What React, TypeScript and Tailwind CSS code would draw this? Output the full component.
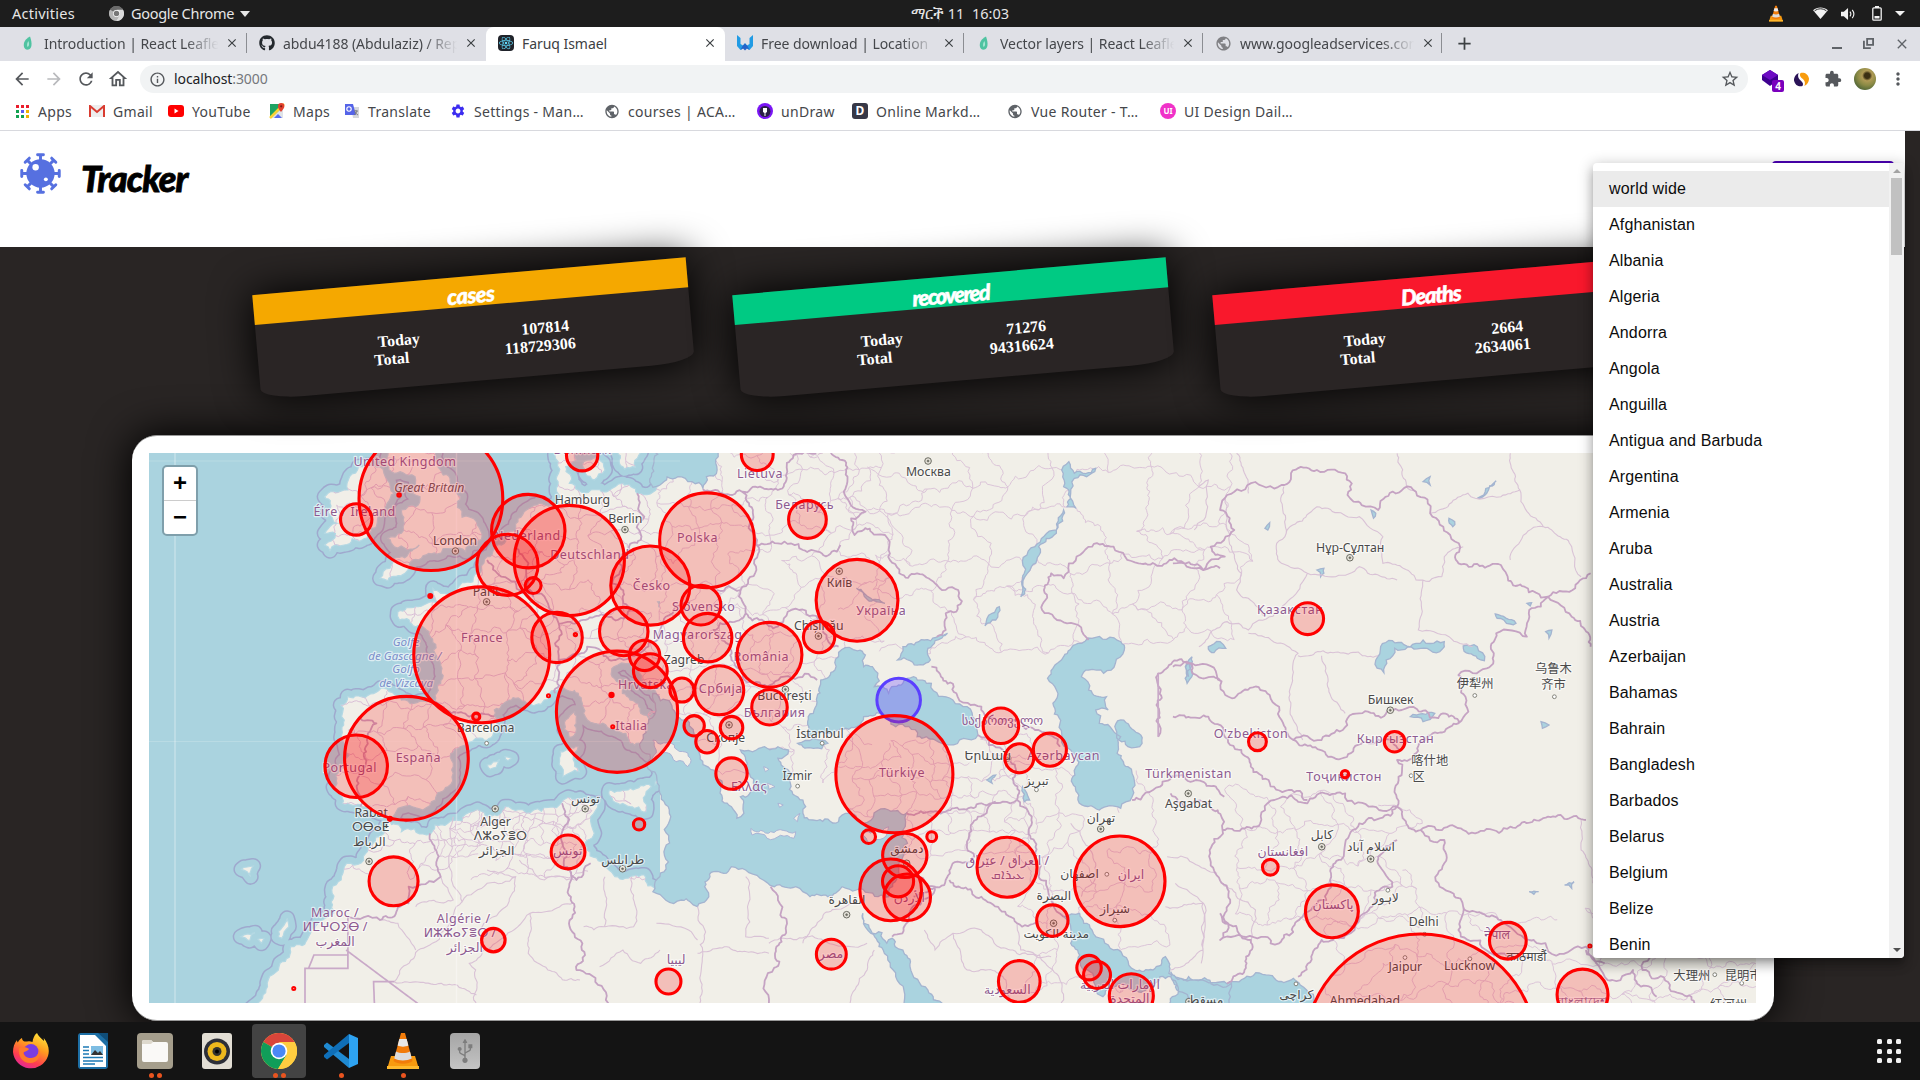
import React from "react";
import { FaGithub, FaReact, FaUsb } from "react-icons/fa";
import {
  MdArrowBack,
  MdArrowForward,
  MdRefresh,
  MdOutlineHome,
  MdInfoOutline,
  MdStarBorder,
  MdExtension,
  MdMoreVert,
  MdPublic,
  MdSettings,
  MdClose,
  MdAdd,
} from "react-icons/md";

/* ---------- map geometry ---------- */

type Pt = [number, number];
type Zone = "W" | "C" | "E";

const ZONES: Record<Zone, { x: number; sx: number }> = {
  W: { x: 130, sx: 2.8 },
  C: { x: 660, sx: 2.8 },
  E: { x: 1180, sx: 2.119 },
};

const parse = (zone: Zone, s: string): Pt[] =>
  s
    .trim()
    .split(/\s+/)
    .map((p) => {
      const [x, y] = p.split(",").map(Number);
      return [ZONES[zone].x + x / ZONES[zone].sx, 430 + y / 3] as Pt;
    });

function makeRandom(seed: number) {
  let s = seed;
  return () => {
    s = (s * 1664525 + 1013904223) % 4294967296;
    return s / 4294967296 - 0.5;
  };
}

/* Midpoint displacement gives coasts and borders a natural wobble. */
function roughen(points: Pt[], closed: boolean, amount: number, seed = 7): string {
  const rnd = makeRandom(seed + points.length * 131);
  const src = closed ? [...points, points[0]] : points;
  const out: Pt[] = [src[0]];
  const split = (a: Pt, b: Pt) => {
    const dx = b[0] - a[0];
    const dy = b[1] - a[1];
    const len = Math.hypot(dx, dy);
    if (len < 4.5) {
      out.push(b);
      return;
    }
    const k = rnd() * amount;
    const m: Pt = [(a[0] + b[0]) / 2 - dy * k, (a[1] + b[1]) / 2 + dx * k];
    split(a, m);
    split(m, b);
  };
  for (let i = 1; i < src.length; i++) split(src[i - 1], src[i]);
  return "M" + out.map((p) => p[0].toFixed(1) + "," + p[1].toFixed(1)).join("L") + (closed ? "Z" : "");
}

/* Province boundaries: an irregular mesh over a rectangle. */
function mesh(x0: number, y0: number, x1: number, y1: number, cell: number, seed: number): string {
  const rnd = makeRandom(seed);
  const cols = Math.ceil((x1 - x0) / cell);
  const rows = Math.ceil((y1 - y0) / cell);
  const g: Pt[][] = [];
  for (let r = 0; r <= rows; r++) {
    g.push([]);
    for (let c = 0; c <= cols; c++) {
      g[r].push([
        x0 + c * cell + (r % 2 ? cell / 2 : 0) + rnd() * cell * 0.7,
        y0 + r * cell + rnd() * cell * 0.7,
      ]);
    }
  }
  let d = "";
  for (let r = 0; r <= rows; r++)
    for (let c = 0; c <= cols; c++) {
      if (c < cols && rnd() > -0.36) d += roughen([g[r][c], g[r][c + 1]], false, 0.55, r * 31 + c);
      if (r < rows && rnd() > -0.3) d += roughen([g[r][c], g[r + 1][c]], false, 0.55, r * 17 + c + 5);
    }
  return d;
}

const WEST_LAND = [
  "740,40 720,100 740,130 800,150 790,190 812,200 800,230 760,240 765,270 760,310 722,325 740,350 810,345 790,362 740,385 728,415 700,445 722,452 770,430 800,388 860,372 940,365 970,340 985,310 970,275 930,262 925,200 895,170 870,120 862,40",
  "610,180 615,140 640,110 700,110 720,150 740,190 720,220 700,240 690,290 650,330 600,345 560,362 545,345 575,310 545,310 580,280 555,250 560,220 545,200 570,185",
  "1195,40 1200,130 1205,200 1190,235 1140,225 1110,240 1080,300 1040,345 1000,380 985,420 960,455 910,480 870,490 848,475 850,500 860,520 800,530 750,545 755,570 800,590 830,600 850,660 870,700 870,760 855,820 830,815 760,810 640,798 590,825 600,870 595,930 590,1020 595,1120 650,1130 690,1145 725,1168 745,1145 820,1140 855,1110 890,1070 905,1030 900,990 940,945 1020,905 1030,870 1020,840 1060,810 1110,820 1160,810 1210,770 1255,790 1270,850 1300,880 1360,900 1400,940 1440,960 1480,990 1485,1030 1470,1065 1500,1060 1525,1010 1515,970 1568,985 1600,960 1480,900 1430,850 1400,810 1380,760 1350,740 1355,710 1400,700 1420,720 1440,760 1490,800 1568,860 1620,880 1620,150 1530,150 1484,165 1420,190 1380,160 1340,182 1290,180 1230,160 1220,110 1250,90 1250,40",
  "1365,40 1370,90 1385,118 1415,112 1425,75 1430,40",
  "1270,95 1310,85 1330,120 1300,150 1275,130",
  "345,1730 385,1670 420,1600 500,1520 570,1450 565,1380 600,1310 660,1270 690,1220 722,1175 760,1205 830,1215 890,1180 960,1145 1050,1130 1130,1140 1210,1115 1260,1105 1310,1120 1290,1160 1300,1210 1280,1260 1330,1310 1440,1335 1480,1380 1568,1410 1620,1430 1620,2600 345,2600",
  "1205,965 1255,950 1258,1025 1212,1040",
  "1220,870 1245,845 1250,900 1230,922",
  "1342,1080 1460,1070 1445,1145 1400,1130 1350,1105",
  "1000,1005 1035,988 1025,1012 1008,1018",
  "1050,980 1068,985 1058,992",
  "312,1318 345,1308 338,1340",
  "415,1520 440,1465 445,1490 425,1525",
  "310,1520 350,1508 335,1532",
  "358,1528 375,1525 368,1540",
];

const CENTRE_WATER = [
  "-20,40 165,40 160,120 130,140 120,175 90,155 50,140 0,165 -20,172",
  "412,920 415,860 440,800 450,750 490,720 500,680 530,652 575,675 570,710 610,730 600,770 640,790 680,760 710,740 760,760 820,810 860,830 885,870 890,915 850,925 770,930 720,920 660,890 620,850 570,860 520,895 470,910",
  "665,690 680,650 740,630 805,610 770,632 750,655 757,690 700,692",
  "1085,745 1100,715 1130,680 1170,640 1210,625 1290,635 1300,660 1275,700 1200,720 1180,740 1200,780 1250,800 1255,840 1220,840 1230,880 1260,890 1290,920 1280,970 1310,1010 1322,1100 1290,1135 1230,1140 1170,1110 1155,1060 1165,1010 1150,960 1120,880 1100,820 1110,780",
  "1290,870 1340,910 1350,940 1310,950 1285,930",
  "-20,790 30,820 70,870 100,920 110,970 150,1020 170,1080 200,1130 215,1165 235,1150 225,1100 265,1070 250,1030 240,990 225,960 270,960 330,950 360,960 330,985 345,1010 370,1030 365,1060 400,1110 400,1150 440,1172 500,1175 530,1150 570,1180 640,1140 690,1150 680,1200 680,1280 665,1340 640,1400 620,1395 550,1380 510,1370 470,1400 420,1400 380,1370 320,1370 280,1345 240,1320 200,1310 150,1325 125,1370 130,1410 105,1430 60,1410 -20,1385",
  "385,940 430,925 470,940 430,955",
  "568,1450 590,1500 635,1540 650,1525 680,1560 700,1610 750,1680 790,1730 685,1730 660,1640 625,1560 590,1510 570,1470",
  "1130,1460 1175,1450 1210,1500 1270,1560 1330,1620 1380,1620 1415,1580 1425,1630 1480,1640 1600,1660 1600,1740 1500,1740 1470,1690 1430,1640 1400,1640 1370,1670 1320,1680 1260,1670 1240,1700 1215,1640 1170,1590 1150,1540",
  "1145,95 1160,130 1220,115 1160,145 1150,190 1165,235 1140,230 1145,180 1130,170",
  "1130,240 1110,310 1060,350 1040,410 1010,500 1020,430 1050,350 1110,300",
  "950,530 940,570 910,588 930,550",
  "550,475 590,505 630,520 580,508",
  "1490,680 1480,740 1475,700",
  "1015,1070 1035,1110 1020,1115",
  "915,1050 940,1035 930,1060",
];

const CENTRE_LAND = [
  "-20,930 40,945 85,985 78,1010 20,968 -20,990",
  "255,1195 310,1205 380,1205 375,1225 300,1225 258,1215",
  "560,1215 620,1205 640,1190 625,1225 590,1240",
  "290,1010 305,1018 295,1025",
  "300,1060 322,1070 305,1078",
  "375,1165 392,1150 385,1175",
  "330,1120 345,1125 335,1132",
];

const EAST_WATER = [
  "-20,1625 100,1662 200,1645 240,1645 255,1665 290,1740 -20,1740",
  "415,690 425,650 450,632 500,640 560,635 560,650 510,655 455,655 437,690 432,728",
  "600,648 630,650 645,692 630,685",
  "488,860 540,850 515,875",
  "668,552 712,580 700,582 672,565",
  "60,650 85,635 97,655 72,668",
  "20,700 25,740 15,760",
  "515,155 530,140 530,165",
  "630,205 670,152 650,190",
  "570,265 582,275 578,290",
  "290,420 305,415 298,440",
  "405,240 415,250 410,265",
  "180,295 190,278 186,300",
  "775,605 788,600 782,625",
  "765,875 782,885 768,895",
  "735,520 745,518 742,528",
  "815,1365 835,1355 830,1375",
  "740,1385 760,1385 750,1393",
];

const BORDERS: [Zone, string][] = [
  ["C", "365,90 420,70 510,90 525,140 520,200 575,245 535,265 545,315 630,315 640,360 670,430 720,430 770,460 835,480 830,545 800,550 800,600 775,620"],
  ["C", "120,178 230,185 260,240 270,345 330,340 400,360 495,365 505,345"],
  ["C", "230,185 280,170 330,180 365,90"],
  ["C", "270,345 270,420 225,480 160,480"],
  ["C", "225,480 240,550 330,590 390,540 450,570 500,650"],
  ["C", "240,550 150,600 200,690 300,770 440,750"],
  ["C", "1200,630 1140,580 1070,540 1075,480 1095,430 1130,445 1145,400 1210,350 1270,350 1340,400 1440,385 1475,410 1568,415"],
  ["C", "1395,920 1395,730 1485,700 1568,750"],
  ["C", "760,710 830,790 900,830 1000,870 1060,900 1120,950"],
  ["C", "890,915 960,960 990,1060 1000,1110 1040,1170 1050,1280 1060,1340 1100,1420 1130,1460"],
  ["C", "690,1150 800,1145 900,1120 960,1115 1000,1110"],
  ["C", "710,1400 800,1350 880,1280 890,1160 940,1115"],
  ["C", "810,1350 900,1400 1000,1480 1060,1480"],
  ["C", "1322,1110 1400,1070 1500,1050 1580,1100"],
  ["C", "310,1370 305,1720"],
  ["C", "710,1340 770,1370 690,1480 650,1520"],
  ["E", "-15,400 50,420 95,380 65,350 115,300 85,240 95,205 215,165 290,120 350,130 355,195 420,240 500,185 530,250 590,400 680,405 730,470 780,500 870,430"],
  ["E", "780,500 740,540 735,620 670,610 650,715 590,735 605,800 590,880 470,840 380,850 300,930 240,930 215,870 210,830 190,795 110,805 25,700 -15,710"],
  ["E", "780,500 830,560 870,650"],
  ["E", "-15,860 60,860 130,960 150,1010 230,1080 270,1110"],
  ["E", "590,880 520,930 460,990 460,1130"],
  ["E", "240,930 320,980 400,940 470,960"],
  ["E", "90,1200 170,1180 200,1110 270,1120 350,1090 400,1130 460,1130"],
  ["E", "-20,1090 60,1120 90,1200 75,1330 95,1450 85,1530 210,1540 260,1460 310,1410 320,1330 350,1240 380,1180 460,1130"],
  ["E", "85,1450 150,1530 140,1580 100,1660"],
  ["E", "250,1640 300,1530 370,1500 400,1440 450,1370 420,1280 460,1230"],
  ["E", "460,1130 510,1200 560,1230 560,1300 550,1370 600,1430 680,1470 740,1530 860,1550 900,1600"],
  ["E", "510,1200 600,1200 700,1190 780,1160 860,1170"],
  ["E", "600,1430 590,1500 680,1570 740,1580"],
  ["E", "860,1560 900,1640 960,1620 1010,1700"],
  ["E", "1010,1540 980,1620 1060,1690 1090,1720"],
  ["W", "855,815 900,850 950,860 1020,860"],
  ["W", "1000,390 1040,440 1100,490 1170,520 1200,580 1190,640 1200,690 1190,790"],
  ["W", "1080,300 1090,370 1110,440 1130,500"],
  ["W", "1420,190 1440,260 1430,330 1370,400 1350,460 1400,540 1300,560 1200,580"],
  ["W", "1200,690 1280,650 1360,690 1440,660 1500,560 1568,520"],
  ["W", "640,860 690,880 660,950 640,1060 645,1130"],
  ["W", "840,1210 860,1270 870,1340 780,1370 780,1420 700,1470 610,1460"],
  ["W", "1210,1120 1215,1310 1245,1430 1265,1560 1250,1620 1330,1740"],
  ["W", "1215,1310 1250,1350 1290,1300"],
];

const STRAIGHT: [Zone, string][] = [
  ["W", "610,1460 610,1615 490,1615 490,1740"],
  ["W", "605,1560 830,1740"],
  ["W", "685,1740 682,1655 740,1655"],
  ["W", "500,1615 515,1575 610,1575"],
  ["C", "1395,920 1395,730"],
];

const THIN: [Zone, string][] = [
  ["W", "870,1340 905,1410 800,1430"],
  ["W", "905,1160 900,1350 930,1415 1000,1360 1080,1340"],
  ["W", "740,1655 830,1550 930,1415"],
  ["W", "700,1470 750,1480 800,1560"],
  ["W", "740,1655 970,1695"],
  ["W", "970,1740 968,1620 950,1600 990,1560 1120,1450 1240,1420"],
  ["W", "1120,1450 1115,1570 1170,1620 1260,1650"],
  ["W", "1000,1320 1080,1340 1040,1440 980,1500"],
  ["W", "1090,1290 1160,1350 1245,1350"],
  ["W", "1330,1340 1328,1490 1270,1490"],
  ["W", "1405,1340 1410,1490 1330,1490"],
  ["W", "1315,1610 1380,1560 1430,1600 1484,1560"],
  ["C", "105,1430 105,1740"],
  ["C", "105,1570 305,1570"],
  ["C", "240,1340 240,1520 305,1525"],
  ["C", "305,1540 580,1540"],
  ["C", "-10,1480 80,1500 105,1530"],
  ["C", "400,1540 460,1450 550,1410"],
  ["C", "520,1740 580,1620 600,1560"],
  ["C", "740,1500 770,1560 820,1510 900,1500 980,1560 1095,1580"],
  ["C", "820,1510 860,1620 960,1640 980,1740"],
  ["C", "1000,1480 1010,1560 1100,1620 1120,1740"],
  ["C", "1420,1280 1560,1330"],
  ["C", "1415,1430 1520,1420 1520,1560 1430,1620"],
  ["C", "1150,1180 1220,1300 1180,1400"],
  ["E", "250,677 420,677"],
  ["E", "145,610 250,670 260,930"],
  ["E", "300,677 320,800 350,850"],
  ["E", "220,170 225,310 205,340 215,400 270,430 330,440 380,410 460,450"],
  ["E", "225,310 290,230 380,260 430,320 430,400 500,450 555,440"],
  ["E", "270,430 240,500 145,600 100,575 40,650"],
  ["E", "515,450 505,600 570,620 620,650"],
  ["E", "555,440 560,380 600,350"],
  ["E", "460,70 480,170 500,185"],
  ["E", "530,250 610,190 680,200 720,180 770,290 700,390"],
  ["E", "720,180 700,70"],
  ["E", "770,290 830,350 850,440"],
  ["E", "120,70 145,190"],
  ["E", "95,205 100,300 130,430 120,480 180,560"],
  ["E", "40,170 60,150 30,300"],
  ["E", "-10,1360 50,1420 45,1600"],
  ["E", "150,1540 160,1440 90,1360"],
  ["E", "850,1170 850,1260 875,1360"],
];

const CIRCLES: [number, number, number][] = [
  [351.5, 407, 58.7], [290.5, 424, 12.8], [325.5, 404, 1], [475, 371.5, 12.8], [431, 433.5, 30],
  [414, 461, 25], [464.5, 457.5, 45], [435, 478, 6.5], [577, 441, 38.7], [530.7, 478, 32.3],
  [618, 371, 13], [659, 424, 15.4], [699.5, 490, 33.4], [572, 494, 16.2], [577.5, 520.5, 19.8],
  [509, 515.5, 19.8], [526, 535, 12.4], [530.7, 547.5, 13.8], [454.5, 520.3, 20.6], [469.5, 518, 0.9],
  [393, 534.5, 55.5], [351, 486.5, 1.2], [388.5, 585, 2.9], [447.5, 568, 0.8], [503.5, 581, 49.5],
  [499, 567.3, 1.3], [500, 593.3, 0.8], [331.5, 619, 50.5], [290.5, 625.5, 25.5], [318, 668.5, 1.2],
  [628, 534.5, 26.5], [668.5, 520, 12.8], [587, 563.5, 20], [628, 577.3, 14.5], [556.5, 563.3, 9.8],
  [566.5, 592.5, 8.3], [597, 594, 9.2], [577, 605.5, 9.2], [597, 631.5, 12.8],
  [730, 632, 47.8], [817, 592.5, 14.5], [832, 619, 11.8], [857, 612, 13.5], [1067.5, 505, 13],
  [1026.5, 605.5, 7.3], [1138.5, 605.5, 8.4], [1098, 632, 3], [1037, 708, 6.4], [1087.3, 744, 21.6],
  [1231, 768, 15], [1292, 812, 20.8], [1298, 772.3, 0.8], [914, 719.5, 37], [822, 708, 24.5],
  [859, 751.5, 12.8], [895.5, 796, 11], [889, 790, 10], [923.5, 813, 18], [832, 801.3, 17],
  [709, 683, 5.6], [760.5, 683, 4], [738.5, 698.3, 18.1], [727, 726.5, 25.2], [733, 719.5, 12.7],
  [740.5, 732.5, 19], [678.5, 779, 12.2], [545.5, 801.3, 10.2], [521.5, 673, 4.6], [463.5, 695.5, 13.8],
  [321, 719.5, 20], [402.5, 767.5, 9.6], [239.5, 807, 0.8],
];

/* kind: p = country, c = city, b = bay, g = island */
const LABELS: [string, number, number, string][] = [
  ["United Kingdom", 330, 380.5, "p"], ["Great Britain", 350, 402, "g"], ["Éire / Ireland", 289, 421.5, "p"],
  ["London", 371, 445, "c"], ["Danmark", 475, 371, "p"], ["Hamburg", 475, 412, "c"], ["Berlin", 510, 427.5, "c"],
  ["Nederland", 430, 441, "p"], ["Deutschland", 481, 456.5, "p"], ["Česko", 531.5, 482, "p"], ["Polska", 569, 443, "p"],
  ["Paris", 397, 487, "c"], ["France", 393, 524, "p"], ["Golfe", 331, 527.5, "b"],
  ["de Gascogne /", 330, 538.7, "b"], ["Golfo", 331, 549.9, "b"], ["de Vizcaya", 331, 561, "b"],
  ["Barcelona", 396, 597.5, "c"], ["España", 341, 622.5, "p"], ["Portugal", 285, 630.5, "p"],
  ["Italia", 515, 596, "p"], ["Hrvatska", 527, 562.5, "p"], ["Zagreb", 558, 542, "c"], ["Magyarország", 569, 522, "p"],
  ["Slovensko", 574, 499, "p"], ["România", 621, 539.5, "p"], ["Србија", 588, 566, "p"], ["България", 632, 585.5, "p"],
  ["București", 640, 571.5, "c"], ["Скопје", 592, 606, "c"], ["İstanbul", 669, 602.5, "c"], ["İzmir", 650.5, 637, "c"],
  ["Ελλάς", 611, 646, "p"], ["Türkiye", 736, 634.5, "p"], ["Lietuva", 620, 390.5, "p"], ["Беларусь", 656.5, 416, "p"],
  ["Москва", 757.5, 389, "c"], ["Київ", 685, 479.5, "c"], ["Україна", 719, 502.5, "p"], ["Chișinău", 668, 514.5, "c"],
  ["საქართველო", 818, 592, "p"], ["Երևան", 806, 621, "c"], ["Azərbaycan", 868, 621, "p"], ["تبریز", 846, 641, "c"],
  ["Türkmenistan", 970, 635.5, "p"], ["Aşgabat", 970, 659.5, "c"], ["تهران", 898.5, 671, "c"], ["اصفهان", 881, 717, "c"],
  ["ایران", 923, 717.5, "p"], ["شیراز", 910, 745.5, "c"], ["العراق / عێراق /", 822, 706.5, "p"], ["ܥܝܪܐܩ", 822, 718, "p"],
  ["دمشق", 740, 697, "c"], ["الأردن", 742, 737, "p"], ["القاهرة", 691, 738.5, "c"], ["البصرة", 860, 735, "c"],
  ["مدينة الكويت", 862, 766, "c"], ["السعودية", 822, 812, "p"], ["الإمارات العربية", 914, 808, "p"],
  ["المتحدة", 922, 819, "p"], ["مسقط", 984, 820, "c"], ["مصر", 678, 782.5, "p"], ["ليبيا", 551.5, 787.5, "p"],
  ["تونس", 477.5, 656, "c"], ["تونس", 463, 698.5, "p"], ["طرابلس", 508, 705.5, "c"], ["Alger", 404, 674.5, "c"],
  ["ⴷⵣⴰⵢⴻⵔ", 408, 686, "c"], ["الجزائر", 405, 698, "c"], ["Rabat", 302.5, 667.5, "c"], ["ⵔⴱⴰⵟ", 302, 679, "c"],
  ["الرباط", 301, 691, "c"], ["Maroc /", 273, 748.5, "p"], ["ⵍⵎⵖⵔⵉⴱ /", 273, 760.5, "p"], ["المغرب", 273, 772.5, "p"],
  ["Algérie /", 378, 753.5, "p"], ["ⵍⵣⵣⴰⵢⴻⵔ /", 375, 765.5, "p"], ["الجزائر", 379, 777.5, "p"],
  ["Нұр-Сұлтан", 1102, 451, "c"], ["Қазақстан", 1053, 501.5, "p"], ["乌鲁木", 1268, 550, "c"], ["齐市", 1268, 563, "c"],
  ["伊犁州", 1204, 562, "c"], ["Бишкек", 1135, 575, "c"], ["O'zbekiston", 1021, 603, "p"], ["Кыргызстан", 1139, 606.5, "p"],
  ["喀什地", 1167, 624.5, "c"], ["区", 1158, 638, "c"], ["Тоҷикистон", 1097, 637.5, "p"], ["کابل", 1079, 685, "c"],
  ["اسلام آباد", 1119, 695, "c"], ["افغانستان", 1047, 699, "p"], ["پاکستان", 1088, 742, "p"], ["لاہور", 1131, 737, "c"],
  ["Delhi", 1162, 756.5, "c"], ["नेपाल", 1222, 766.5, "p"], ["काठमाडौं", 1246, 785, "c"], ["Jaipur", 1147, 793, "c"],
  ["Lucknow", 1199.5, 792, "c"], ["Ahmedabad", 1114, 820.5, "c"], ["کراچی", 1058, 816, "c"], ["বাংলাদেশ", 1292, 821.5, "p"],
  ["大理州", 1381, 800, "c"], ["昆明市", 1423, 800, "c"], ["红河州", 1411, 824, "c"],
];

const CAPITALS: Pt[] = [
  [371.5, 450], [510, 432.5], [397, 491.5], [757.5, 376.5], [685, 466.5], [668, 519.5], [404, 660.5],
  [477.5, 660.5], [508, 709.5], [301, 703.5], [1102, 455.5], [1135, 580], [970, 648], [898.5, 677], [1079, 691.5],
  [1119, 701.5], [691, 747], [740, 705], [860, 754], [822.5, 619], [595, 592], [641, 563], [970.5, 818],
];

const TOWNS: Pt[] = [
  [397, 607], [671, 607], [651, 642], [846, 645], [903.5, 714], [910, 751.5], [1204, 568], [1269, 569],
  [1152, 633.5], [1133, 727], [1163, 763], [1147, 782], [1200, 783], [1400, 796], [1422, 803], [1058, 803.5],
];

const K = 1920 / 1568;
const paths = (zone: Zone, list: string[], amt = 0.5) => list.map((s, i) => roughen(parse(zone, s), true, amt, i + 3)).join("");
const linePath = (list: [Zone, string][], amt: number) =>
  list.map(([z, s], i) => roughen(parse(z, s), false, amt, i + 11)).join("");

const WEST = paths("W", WEST_LAND);
const CWATER = paths("C", CENTRE_WATER);
const CLAND = paths("C", CENTRE_LAND);
const EWATER = paths("E", EAST_WATER);

const LABEL_FILL: Record<string, string> = { p: "#8d5b91", c: "#4a4a4a", b: "#7b8fca", g: "#6b5a60" };

function WorldMap() {
  const font = '"Noto Sans", "DejaVu Sans", "Noto Sans CJK SC", sans-serif';
  return (
    <svg viewBox="149 453 1607 550" className="block h-[550px] w-[1607px]">
      <defs>
        <clipPath id="west-land">
          <path d={WEST} />
        </clipPath>
        <clipPath id="west-zone">
          <rect x="149" y="453" width="512" height="550" />
        </clipPath>
      </defs>
      <rect x="149" y="453" width="1607" height="550" fill="#aad3df" />
      <g clipPath="url(#west-zone)">
        <path d={WEST} fill="none" stroke="#9fa9ce" strokeWidth="16" strokeLinejoin="round" />
        <path d={WEST} fill="none" stroke="#aad3df" strokeWidth="13" strokeLinejoin="round" />
        <path d={WEST} fill="#f1efe8" stroke="#b4d8e3" strokeWidth="1.2" />
        <g clipPath="url(#west-land)" fill="none" stroke="#d9bfd6">
          <path d={mesh(330, 440, 680, 850, 24, 5)} strokeWidth="1" />
          <path d={mesh(440, 800, 580, 850, 14, 15)} strokeWidth="0.9" />
        </g>
      </g>
      <rect x="660" y="453" width="1096" height="550" fill="#f1efe8" />
      <g fill="none" stroke="#dcc5d9" strokeWidth="1">
        <path d={mesh(655, 450, 860, 760, 27, 21)} />
        <path d={mesh(860, 440, 1195, 640, 40, 8)} />
        <path d={mesh(850, 740, 1010, 850, 19, 32)} />
        <path d={mesh(1010, 780, 1130, 960, 34, 9)} />
        <path d={mesh(1230, 800, 1390, 920, 30, 19)} />
        <path d={mesh(1330, 920, 1756, 1003, 36, 29)} />
      </g>
      <path d={CWATER + EWATER} fill="#aad3df" stroke="#a4b4d0" strokeWidth="1.3" />
      <path d={CLAND} fill="#f1efe8" stroke="#a9b4d6" strokeWidth="1" />
      <path d={linePath(THIN, 0.3)} fill="none" stroke="#d9c2d6" strokeWidth="1.1" />
      <path d={linePath(BORDERS, 0.5)} fill="none" stroke="#c5a3c3" strokeWidth="1.8" strokeLinejoin="round" />
      <path d={linePath(STRAIGHT, 0)} fill="none" stroke="#c9a9c8" strokeWidth="1.7" />
      <path d="M175 453V1003M456.5 453V1003" stroke="#ffffff" strokeOpacity=".35" strokeWidth="1.400" />
      <path d="M149 461H680M149 741.5H680" stroke="#ffffff" strokeOpacity=".18" strokeWidth="1.200" />
      {CAPITALS.map(([x, y], i) => (
        <g key={i} fill="#e6e3da" stroke="#6b6b62">
          <circle cx={x * K + 0.5} cy={y * K} r="3.3" strokeWidth="1" />
          <circle cx={x * K + 0.5} cy={y * K} r="1" fill="#6b6b62" strokeWidth=".6" />
        </g>
      ))}
      {TOWNS.map(([x, y], i) => (
        <circle key={i} cx={x * K + 0.5} cy={y * K} r="1.9" fill="#fff" stroke="#77776e" strokeWidth=".9" />
      ))}
      {LABELS.map(([t, x, y, k], i) => (
        <text
          key={i}
          x={x * K + 0.8}
          y={y * K}
          textAnchor="middle"
          fontFamily={font}
          fontSize={k === "b" ? 11.6 : k === "p" ? 12.5 : 12.3}
          fontStyle={k === "b" || k === "g" ? "italic" : "normal"}
          letterSpacing={k === "p" && t.charCodeAt(0) < 1400 ? 0.5 : 0}
          fill={LABEL_FILL[k]}
          stroke="#ffffff"
          strokeOpacity=".6"
          strokeWidth="2.4"
          strokeLinejoin="round"
          paintOrder="stroke"
        >
          {t}
        </text>
      ))}
      <circle cx={733.5 * K + 0.5} cy={571.5 * K + 0.3} r={17.8 * K} fill="#6f50ff" fillOpacity=".33" stroke="#5b3fff" strokeWidth="3" />
      <g fill="#ff0000" fillOpacity=".2" stroke="#ff0000" strokeWidth="3.1">
        {CIRCLES.map(([x, y, r], i) => (
          <circle key={i} cx={x * K + 0.5} cy={y * K + 0.3} r={r * K} />
        ))}
        <circle cx="1420.5" cy="1050" r="116" />
      </g>
    </svg>
  );
}

/* ---------- small drawings ---------- */

const Leaf = () => (
  <svg viewBox="0 0 16 16" className="size-4">
    <path d="M10 1.500C5 4 3 8 4 12c.6 2 2.500 3 4.500 2.500C12 13.500 12.500 8 10 1.500z" fill="#4fc3a1" />
    <path d="M8.500 6c-1.500 2-2 4-1 6 1.500-.5 2.200-3 1-6z" fill="#a6e6d2" />
  </svg>
);

const Cone = ({ className }: { className: string }) => (
  <svg viewBox="0 0 32 36" className={className}>
    <path d="M4 23h24l4 13H0z" fill="#f89a0f" />
    <path d="M0 33h32v3H0z" fill="#ffb92e" />
    <path d="M14 0h4l7.500 28c-4 3.500-15 3.500-19 0z" fill="#f27c0a" />
    <path d="M12.300 6h7.400l1.700 6.500c-3 1.500-8 1.500-10.800 0z" fill="#e8e8e8" />
    <path d="M9 18.500c4 2 10 2 14 0l1.800 7c-5 2.500-13 2.500-17.600 0z" fill="#dcdcdc" />
  </svg>
);

const Virus = () => (
  <svg viewBox="0 0 42 42" className="size-[41px]">
    <g stroke="#5670e0" strokeWidth="3" strokeLinecap="round" fill="none">
      {[0, 45, 90, 135, 180, 225, 270, 315].map((a) => (
        <path key={a} d="M21 8V2M18 1.800h6" transform={`rotate(${a} 21 21)`} />
      ))}
    </g>
    <circle cx="21" cy="21" r="14.500" fill="#5670e0" />
    <circle cx="16" cy="14.500" r="3.300" fill="#fff" />
    <circle cx="26.500" cy="27" r="2" fill="#fff" />
  </svg>
);

const ChromeLogo = ({ className, gray = false }: { className: string; gray?: boolean }) => (
  <svg viewBox="0 0 36 36" className={className}>
    <circle cx="18" cy="18" r="18" fill={gray ? "#8a8a8a" : "#ffcd40"} />
    <path d="M18 18L2.400 9A18 18 0 0 1 33.600 9z" fill={gray ? "#6b6b6b" : "#d9453a"} />
    <path d="M2.400 9A18 18 0 0 0 17 36l8.500-14L18 18z" fill={gray ? "#b5b5b5" : "#109d59"} />
    <path d="M18 9h15.600A18 18 0 0 1 17 36l8.500-14z" fill={gray ? "#dadada" : "#ffcd40"} />
    <circle cx="18" cy="18" r="8.300" fill="#fff" />
    <circle cx="18" cy="18" r="6.600" fill={gray ? "#777" : "#4a88f5"} />
  </svg>
);

/* ---------- desktop chrome ---------- */

function TopBar() {
  return (
    <div className="relative flex h-[27px] flex-none items-center bg-[#1d1d1d] text-[14.500px] text-[#e6e6e6]">
      <span className="ml-3 w-[97px] tracking-[0.25px]">Activities</span>
      <ChromeLogo gray className="size-[15px]" />
      <span className="ml-[7px] tracking-[-0.3px]">Google Chrome</span>
      <span className="ml-[6px] size-0 border-x-[5px] border-t-[6px] border-x-transparent border-t-[#e6e6e6]" />
      <div className="absolute inset-0 flex items-center justify-center whitespace-pre">ማርች 11  16:03</div>
      <div className="ml-auto flex h-full items-center">
        <Cone className="mr-[30px] h-[17px] w-[14px]" />
        <svg viewBox="0 0 16 14" className="mr-[13px] h-[13px] w-[15px]">
          <path d="M0 3.500C4.500-.5 11.500-.5 16 3.500L8 13z" fill="#f2f2f2" />
          <path d="M1.600 4.200C5.500 1.200 10.500 1.200 14.400 4.200" stroke="#1d1d1d" strokeWidth="1" fill="none" />
        </svg>
        <svg viewBox="0 0 16 14" className="mr-4 h-[14px] w-[15px]" fill="#f2f2f2">
          <path d="M0 4.500h3L7.500.5v13L3 9.500H0z" />
          <path d="M9.500 4.500q2 2.500 0 5M12 2.500q3.500 4.500 0 9" stroke="#f2f2f2" strokeWidth="1.200" fill="none" />
        </svg>
        <svg viewBox="0 0 10 15" className="mr-[13px] h-[15px] w-[10px]">
          <rect x=".8" y="1.800" width="8.400" height="12.400" rx="1" fill="none" stroke="#f2f2f2" strokeWidth="1.300" />
          <path d="M3 0h4v2H3zM2.500 10h5v2.500h-5z" fill="#f2f2f2" />
        </svg>
        <span className="mr-[15px] size-0 border-x-[5px] border-t-[5px] border-x-transparent border-t-[#f2f2f2]" />
      </div>
    </div>
  );
}

const BlueW = () => (
  <svg viewBox="0 0 16 16" className="size-4">
    <path d="M0 0l3.500 3v6L6 10.500 8 8l2 2.500L12.500 9V3L16 0v11l-3.500 4L8 12l-4.500 3L0 11z" fill="#219be4" />
    <path d="M3.500 15L5.500 11 8 8.500 10.500 11l2 4-2.500-1.500-2 2-2-2z" fill="#2463c9" />
  </svg>
);

const TABS = [
  { title: "Introduction | React Leaflet", icon: <Leaf /> },
  { title: "abdu4188 (Abdulaziz) / Repos", icon: <FaGithub className="size-4 text-[#24292e]" /> },
  {
    title: "Faruq Ismael",
    active: true,
    icon: (
      <span className="flex size-4 items-center justify-center rounded-sm bg-[#20232a]">
        <FaReact className="size-[14px] text-[#61dafb]" />
      </span>
    ),
  },
  { title: "Free download | Location", icon: <BlueW /> },
  { title: "Vector layers | React Leaflet", icon: <Leaf /> },
  { title: "www.googleadservices.com", icon: <MdPublic className="size-[17px] text-[#808084]" /> },
];

function TabStrip() {
  return (
    <div className="flex h-[34px] flex-none items-center bg-[#dfe0e6] pl-2 text-[14px] text-[#45474b]">
      {TABS.map((t, i) => (
        <div
          key={i}
          className={
            "relative flex h-full w-[239px] flex-none items-center pb-[2px] pl-3 " +
            (t.active ? "rounded-t-lg bg-white text-[#3c4043]" : "")
          }
        >
          {t.icon}
          <span
            className={
              "ml-2 w-[176px] overflow-hidden whitespace-nowrap tracking-[-0.05px] " +
              (t.active ? "" : "[mask-image:linear-gradient(to_right,black_80%,transparent_99%)]")
            }
          >
            {t.title}
          </span>
          <MdClose className="ml-[5px] size-[14px] flex-none text-[#3c4043]" />
          {i !== 1 && !t.active && <span className="absolute right-0 h-5 w-px bg-[#8b8d92]" />}
        </div>
      ))}
      <MdAdd className="mb-[2px] ml-3 size-[21px] text-[#3c4043]" />
      <div className="ml-auto flex items-center pb-[1px] text-[#5f6368]">
        <span className="mt-2 h-[2px] w-[10px] bg-[#5f6368]" />
        <svg viewBox="0 0 12 12" className="ml-[21px] size-[11px]" fill="none" stroke="#5f6368" strokeWidth="2">
          <path d="M4.500 1H11v6.500H4.500zM1 3v8h7.500" />
        </svg>
        <MdClose className="ml-5 mr-[10px] size-4" />
      </div>
    </div>
  );
}

function Toolbar() {
  return (
    <div className="flex h-9 flex-none items-center bg-white pl-3 text-[#55585c]">
      <MdArrowBack className="size-5" />
      <MdArrowForward className="ml-3 size-5 text-[#b9babd]" />
      <MdRefresh className="ml-3 size-5" />
      <MdOutlineHome className="ml-[11px] size-[22px]" />
      <div className="ml-[11px] flex h-7 w-[1608px] items-center rounded-full bg-[#f1f3f4] pl-[9px] pr-2">
        <MdInfoOutline className="size-[17px]" />
        <span className="ml-2 pb-px text-[14px] tracking-[-0.1px] text-[#75787c]">
          <span className="text-[#202124]">localhost</span>:3000
        </span>
        <MdStarBorder className="ml-auto size-5" />
      </div>
      <div className="relative ml-[14px] size-[22px]">
        <svg viewBox="0 0 22 22" className="size-[22px]">
          <path d="M8 2l8 5v5l-8 6-8-6V7z" fill="#3f0090" />
          <path d="M8 2l8 5-8 5-8-5z" fill="#6d0cc4" />
        </svg>
        <span className="absolute -bottom-[2px] left-[10px] flex h-[12px] w-[12px] items-center justify-center rounded-[2px] bg-[#7a00bd] text-[10px] font-bold text-white">
          4
        </span>
      </div>
      <svg viewBox="0 0 16 16" className="ml-[10px] size-[15px]">
        <path d="M5 1C1 3 0 6 0 9c1 5 5 7 9 6 2-3-1-5-3-7S4 3 5 1z" fill="#2b1458" />
        <path d="M11 15c4-2 5-5 5-8-1-5-5-7-9-6-2 3 1 5 3 7s2 5 1 7z" fill="#f89c0e" />
      </svg>
      <MdExtension className="ml-[15px] size-[18px]" />
      <span className="ml-3 size-[22px] rounded-full bg-[radial-gradient(circle_at_60%_35%,#3b2f12_0_14%,#b09a55_26%,#8a8a45_50%,#4a6236_80%)]" />
      <MdMoreVert className="ml-3 size-5" />
    </div>
  );
}

const AppsGrid = () => (
  <span className="grid grid-cols-3 gap-[2px]">
    {["#ea1d2c", "#ea1d2c", "#ea1d2c", "#12a150", "#5c5cf0", "#f0b000", "#12a150", "#12a150", "#f0b000"].map((c, i) => (
      <span key={i} className="size-[3px]" style={{ background: c }} />
    ))}
  </span>
);

const BOOKMARKS: { w: string; label: string; icon: React.ReactNode }[] = [
  { w: "w-[75px]", label: "Apps", icon: <AppsGrid /> },
  {
    w: "w-[79px]",
    label: "Gmail",
    icon: (
      <svg viewBox="0 0 16 12" className="h-3 w-4">
        <path d="M0 0h16v12H0z" fill="#eee" />
        <path d="M1 12V1l7 6 7-6v11" fill="none" stroke="#d93b30" strokeWidth="2" />
      </svg>
    ),
  },
  {
    w: "w-[101px]",
    label: "YouTube",
    icon: (
      <svg viewBox="0 0 16 12" className="h-3 w-4">
        <rect width="16" height="12" rx="3" fill="#f00" />
        <path d="M6.500 3.500v5l4-2.500z" fill="#fff" />
      </svg>
    ),
  },
  {
    w: "w-[75px]",
    label: "Maps",
    icon: (
      <svg viewBox="0 0 16 16" className="size-4">
        <path d="M1 1h13v14H1z" fill="#1fa463" />
        <path d="M2 15L14 4v11z" fill="#dfe3e8" />
        <path d="M1 15L15 1" stroke="#f9d335" strokeWidth="2.500" />
        <path d="M5 15l4-4 4 4z" fill="#5b6cf0" />
        <path d="M12 9C9.500 6 9 4.500 9 3.200a3.200 3.200 0 0 1 6.400 0C15.400 4.500 14.500 6 12 9z" fill="#e2402f" />
        <circle cx="12.200" cy="3.300" r="1.100" fill="#7c1b12" />
      </svg>
    ),
  },
  {
    w: "w-[106px]",
    label: "Translate",
    icon: (
      <svg viewBox="0 0 16 16" className="size-4">
        <path d="M7 4h8v11H9z" fill="#d5d7dc" />
        <path d="M1 1h8l3 11H1z" fill="#5564e8" />
        <circle cx="5" cy="6" r="2.200" fill="none" stroke="#fff" strokeWidth="1.100" />
        <path d="M10 8h4M12 7v1M13 8q-1 3-3 4M11 9q1 2 3 3" stroke="#777" fill="none" strokeWidth=".9" />
      </svg>
    ),
  },
  { w: "w-[154px]", label: "Settings - Man…", icon: <MdSettings className="-ml-px size-4 text-[#3c2cf0]" /> },
  { w: "w-[153px]", label: "courses | ACA…", icon: <MdPublic className="size-[17px] text-[#5f6368]" /> },
  {
    w: "w-[95px]",
    label: "unDraw",
    icon: (
      <svg viewBox="0 0 16 16" className="size-4">
        <circle cx="8" cy="8" r="8" fill="#7a15f5" />
        <circle cx="8" cy="8.500" r="5.500" fill="#2b2045" />
        <path d="M6 5h4v4L8.500 10v3h-1v-3L6 9z" fill="#fff" />
      </svg>
    ),
  },
  {
    w: "w-[155px]",
    label: "Online Markd…",
    icon: (
      <span className="flex size-4 items-center justify-center rounded-[3px] bg-[#373847] text-[12px] font-bold text-white">D</span>
    ),
  },
  { w: "w-[153px]", label: "Vue Router - T…", icon: <MdPublic className="size-[17px] text-[#5f6368]" /> },
  {
    w: "w-[150px]",
    label: "UI Design Dail…",
    icon: (
      <span className="flex size-4 items-center justify-center rounded-full bg-[#f032c8] text-[8px] font-bold text-white">UI</span>
    ),
  },
];

function BookmarkBar() {
  return (
    <div className="flex h-[34px] flex-none items-center border-b border-[#d8d9de] bg-white pb-[5px] pl-[14px] text-[14px] tracking-[0.3px] text-[#45474b]">
      {BOOKMARKS.map((b) => (
        <div key={b.label} className={"flex flex-none items-center whitespace-nowrap " + b.w}>
          <span className="flex w-4 flex-none justify-center tracking-normal">{b.icon}</span>
          <span className="ml-2">{b.label}</span>
        </div>
      ))}
    </div>
  );
}

/* ---------- page ---------- */

const STATS = [
  {
    title: "cases", bg: "bg-[#f5a800]", today: "107814", total: "118729306",
    left: "pl-[116px]", gap: "w-[131px]", track: "tracking-[-0.6px]",
  },
  {
    title: "recovered", bg: "bg-[#00ca83]", today: "71276", total: "94316624",
    left: "pl-[119px]", gap: "w-[133px]", track: "tracking-[-1.6px]",
  },
  {
    title: "Deaths", bg: "bg-[#f9182c]", today: "2664", total: "2634061",
    left: "pl-[122px]", gap: "w-[135px]", track: "tracking-[-1.3px]",
  },
];

function StatCard({ s }: { s: (typeof STATS)[number] }) {
  return (
    <div className="h-[105px] w-[435px] flex-none -rotate-5 rounded-b-[10%] bg-[#2a2525] font-['Liberation_Serif',serif] text-base font-bold leading-[18px] text-white shadow-[0_0_40px_1px_#000]">
      <div
        className={
          "flex h-[30px] items-center justify-center pt-[7px] font-['Lato',sans-serif] text-[22px] font-black italic leading-none [-webkit-text-stroke:0.5px_white] " +
          s.bg + " " + s.track
        }
      >
        {s.title}
      </div>
      <div className={"flex pt-[19px] " + s.left}>
        <div className={s.gap}>
          <p className="pl-[5px]">Today</p>
          <p>Total</p>
        </div>
        <div>
          <p className="pl-[18px]">{s.today}</p>
          <p>{s.total}</p>
        </div>
      </div>
    </div>
  );
}

const COUNTRIES = [
  "world wide", "Afghanistan", "Albania", "Algeria", "Andorra", "Angola", "Anguilla", "Antigua and Barbuda", "Argentina",
  "Armenia", "Aruba", "Australia", "Austria", "Azerbaijan", "Bahamas", "Bahrain", "Bangladesh", "Barbados", "Belarus",
  "Belgium", "Belize", "Benin",
];

function CountryMenu() {
  return (
    <div className="absolute left-[1593px] top-[32px] z-20 flex h-[795px] w-[311px] overflow-hidden rounded bg-white font-['Liberation_Sans',sans-serif] text-base tracking-[0.15px] text-[#0c0c0c] shadow-[0_5px_5px_-3px_rgba(0,0,0,.2),0_8px_10px_1px_rgba(0,0,0,.14),0_3px_14px_2px_rgba(0,0,0,.22)]">
      <ul className="flex-1 pt-2">
        {COUNTRIES.map((c, i) => (
          <li key={c} className={"flex h-9 items-center pl-4 " + (i === 0 ? "bg-[#ebebeb]" : "")}>
            {c}
          </li>
        ))}
      </ul>
      <div className="flex w-[15px] flex-col items-center bg-[#f1f1f1]">
        <span className="mt-[6px] size-0 border-x-4 border-b-4 border-x-transparent border-b-[#a3a3a3]" />
        <span className="mt-[5px] h-[77px] w-[11px] bg-[#c1c1c1]" />
        <span className="mb-[6px] mt-auto size-0 border-x-4 border-t-4 border-x-transparent border-t-[#505050]" />
      </div>
    </div>
  );
}

function Page() {
  return (
    <div className="relative h-[891px] flex-none overflow-hidden bg-[#292524]">
      <header className="flex h-[116px] w-[1905px] items-start justify-between bg-white pl-5 pr-[11px]">
        <div className="flex">
          <div className="pt-[22px]">
            <Virus />
          </div>
          <h1 className="ml-[20px] mt-[24px] font-['Lato',sans-serif] text-[36px] font-black italic leading-[46px] tracking-[-0.9px] text-black [-webkit-text-stroke:0.8px_black]">
            Tracker
          </h1>
        </div>
        <div className="mt-[30px] h-10 w-[122px] rounded bg-[#4b00b5]" />
      </header>
      <div className="flex gap-[45px] pl-[256px] pt-[29px]">
        {STATS.map((s) => (
          <StatCard key={s.title} s={s} />
        ))}
      </div>
      <main className="ml-[132px] mt-[54px] h-[586px] w-[1642px] rounded-[25px] border-y border-[#999] bg-white px-[17px] pt-[17px] shadow-[0_0_40px_2px_#000]">
        <div className="relative">
          <WorldMap />
          <div className="absolute left-[13px] top-[12px] flex w-9 flex-col overflow-hidden rounded-[5px] border-2 border-[#7f9fab] bg-white text-center font-['Liberation_Sans',sans-serif] text-[24px] font-bold leading-[31px] text-black">
            <span className="h-[34px] border-b border-[#ccc]">+</span>
            <span className="h-[33px]">−</span>
          </div>
        </div>
      </main>
      <CountryMenu />
    </div>
  );
}

/* ---------- dock ---------- */

const Firefox = () => (
  <svg viewBox="0 0 36 36" className="size-9">
    <defs>
      <linearGradient id="fx" x1=".8" y1="0" x2=".3" y2="1">
        <stop offset="0" stopColor="#ffe83c" />
        <stop offset=".4" stopColor="#ff9a1f" />
        <stop offset=".75" stopColor="#ff3f4e" />
        <stop offset="1" stopColor="#e0279a" />
      </linearGradient>
    </defs>
    <path d="M24 0c1 3 4 5 7 8 0-1 0-2-.3-3C35 10 37 17 35 23A18 18 0 0 1 0 19C0 14 1.500 10 4 7c0 1 .3 2 .8 2.500C6 7 8 5.500 9 5c0 2 1 3 2.500 3.500 3 0 5-1 8 .5C20 6 21 2 24 0z" fill="url(#fx)" />
    <circle cx="18" cy="18.500" r="7.500" fill="#7a3ce0" />
    <path d="M6 15c4-1 8-1 10 1-2 3-5 2-6 4 1 3 4 5 8 5 5 0 8-4 8-9 3 6-1 14-9 14C9 30 5 23 6 15z" fill="#ff7a2a" />
  </svg>
);

const Writer = () => (
  <svg viewBox="0 0 30 36" className="h-9 w-[30px]">
    <rect width="30" height="36" rx="3" fill="#1d6fa5" />
    <path d="M2 2h15l11 11v21H2z" fill="#fff" />
    <path d="M20 0h10v9z" fill="#0f4d78" />
    <path d="M5 14h6M5 17.500h6M5 21h6M5 24.500h20M5 28h20M5 31h12" stroke="#1c7ab5" strokeWidth="1.600" />
    <rect x="13" y="13" width="12" height="9" fill="#7dbde3" />
    <path d="M13 22l4-5 3 3 2-2 3 4z" fill="#333" />
  </svg>
);

const Files = () => (
  <svg viewBox="0 0 36 36" className="size-9">
    <rect width="36" height="36" rx="4" fill="#a59e8c" />
    <path d="M5 9a2 2 0 0 1 2-2h7l2 2h13a2 2 0 0 1 2 2v16a2 2 0 0 1-2 2H7a2 2 0 0 1-2-2z" fill="#faf9f7" />
    <path d="M5 11V9a2 2 0 0 1 2-2h7l2 2-2 2z" fill="#ded9cd" />
  </svg>
);

const Speaker = () => (
  <svg viewBox="0 0 30 36" className="h-9 w-[30px]">
    <rect width="30" height="36" rx="3" fill="#e2ded4" />
    <circle cx="15" cy="18.500" r="13" fill="#2d2f38" />
    <circle cx="15" cy="18.500" r="9.500" fill="#edb81d" />
    <circle cx="15" cy="18.500" r="4.500" fill="#33332f" />
    <circle cx="15" cy="18.500" r="2" fill="#000" />
  </svg>
);

const Code = () => (
  <svg viewBox="0 0 34 34" className="size-[34px]">
    <path d="M0 11l3-2.500L25 25v9L0 13z" fill="#1f8ad2" />
    <path d="M0 23l3 2.500L25 9V0L0 21z" fill="#0f6fb8" />
    <path d="M25 0l9 4v26l-9 4z" fill="#2ea3f2" />
  </svg>
);

const DOCK: { icon: React.ReactNode; dots: number; active?: boolean }[] = [
  { icon: <Firefox />, dots: 0 },
  { icon: <Writer />, dots: 0 },
  { icon: <Files />, dots: 2 },
  { icon: <Speaker />, dots: 0 },
  { icon: <ChromeLogo className="size-9" />, dots: 2, active: true },
  { icon: <Code />, dots: 1 },
  { icon: <Cone className="h-9 w-8" />, dots: 1 },
  {
    icon: (
      <span className="flex h-9 w-[30px] items-center justify-center rounded bg-gradient-to-b from-[#a5a5a5] to-[#c4c4c4]">
        <FaUsb className="size-6 -rotate-90 text-[#7d7d7d]" />
      </span>
    ),
    dots: 0,
  },
];

function Dock() {
  return (
    <div className="flex h-[58px] flex-none items-center bg-[#141414] pl-1">
      {DOCK.map((d, i) => (
        <div
          key={i}
          className={
            "relative mr-2 flex h-[54px] w-[54px] items-center justify-center rounded " + (d.active ? "bg-[#434343]" : "")
          }
        >
          {d.icon}
          <span className="absolute bottom-0 flex gap-[3px]">
            {Array.from({ length: d.dots }, (_, k) => (
              <span key={k} className="size-[5px] rounded-full bg-[#e9541f]" />
            ))}
          </span>
        </div>
      ))}
      <div className="ml-auto mr-[19px] grid grid-cols-3 gap-[4.500px]">
        {Array.from({ length: 9 }, (_, k) => (
          <span key={k} className="size-[5px] rounded-[1.500px] bg-[#f2f2f2]" />
        ))}
      </div>
    </div>
  );
}

export default function App() {
  return (
    <div className="flex h-[1080px] w-[1920px] flex-col overflow-hidden bg-[#141414] font-['Noto_Sans','DejaVu_Sans',sans-serif]">
      <TopBar />
      <TabStrip />
      <Toolbar />
      <BookmarkBar />
      <Page />
      <Dock />
    </div>
  );
}
